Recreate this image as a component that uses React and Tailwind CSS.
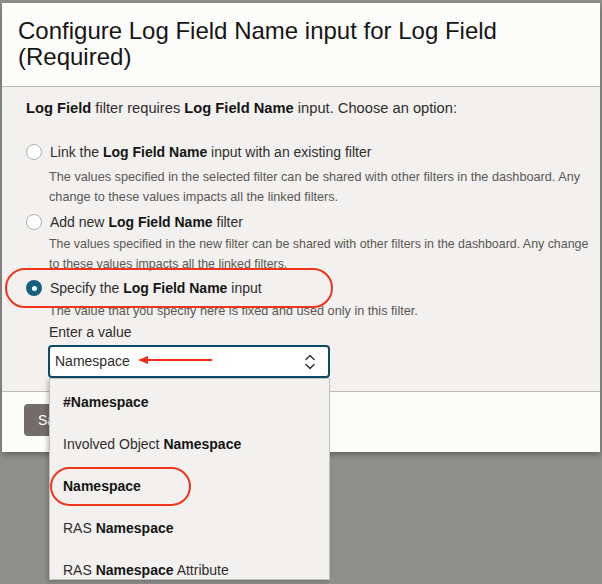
import React from 'react';

const B = ({ children }) => <span className="font-bold text-[#161513]">{children}</span>;

const OPTIONS = [
  {
    label: <>Link the <B>Log Field Name</B> input with an existing filter</>,
    desc: [
      'The values specified in the selected filter can be shared with other filters in the dashboard. Any',
      'change to these values impacts all the linked filters.',
    ],
    rowMt: 'mt-[22px]',
    descMt: 'mt-[3px]',
    descSize: 'text-[12.7px]',
  },
  {
    label: <>Add new <B>Log Field Name</B> filter</>,
    desc: [
      'The values specified in the new filter can be shared with other filters in the dashboard. Any change',
      'to these values impacts all the linked filters.',
    ],
    rowMt: 'mt-[3px]',
    descMt: 'mt-0',
    descSize: 'text-[12.4px]',
  },
  {
    label: <>Specify the <B>Log Field Name</B> input</>,
    desc: ['The value that you specify here is fixed and used only in this filter.'],
    rowMt: 'mt-[2px]',
    descMt: 'mt-[1px]',
    descSize: 'text-[12.7px]',
    checked: true,
  },
];

const ITEMS = [
  <B>#Namespace</B>,
  <>Involved Object <B>Namespace</B></>,
  <B>Namespace</B>,
  <>RAS <B>Namespace</B></>,
  <>RAS <B>Namespace</B> Attribute</>,
];

export default function App() {
  return (
    <div className="relative w-[602px] h-[584px] overflow-hidden bg-[#8f8f8d] pt-[3px] pl-[2px] font-['Liberation_Sans',Arial,sans-serif] text-[#161513]">
      {/* dialog */}
      <div className="w-[598px] shadow-[0_3px_6px_rgba(0,0,0,0.3)]">
        <div className="bg-[#fcfcfb] px-[16px] pt-[15px] pb-[16px] border-b border-[#bcb8b3] text-[24px] leading-[26px]">
          Configure Log Field Name input for Log Field
          <br />
          (Required)
        </div>

        <div className="bg-[#f2f1ef] pl-[24px] pt-[11px] pb-[13px] border-b border-[#bcb8b3]">
          <p className="text-[14.7px] leading-[20px] text-[#312d2a] whitespace-nowrap">
            <B>Log Field</B> filter requires <B>Log Field Name</B> input. Choose an option:
          </p>

          {OPTIONS.map((o, i) => (
            <div key={i}>
              <div className={`flex items-center h-[24px] ${o.rowMt}`}>
                {o.checked ? (
                  <span className="w-4 h-4 rounded-full bg-[#14607e] flex items-center justify-center">
                    <span className="w-[5px] h-[5px] rounded-full bg-white" />
                  </span>
                ) : (
                  <span className="w-4 h-4 rounded-full bg-white border border-[#b4afa9]" />
                )}
                <span className="ml-[8px] text-[14px] text-[#312d2a]">{o.label}</span>
              </div>
              <div className={`ml-[23px] leading-[20px] text-[#5b5752] ${o.descSize} ${o.descMt}`}>
                {o.desc.map((d, j) => (
                  <div key={j} className="whitespace-nowrap">{d}</div>
                ))}
              </div>
            </div>
          ))}

          <div className="ml-[23px] mt-[1px] text-[14px] leading-[20px] text-[#312d2a]">Enter a value</div>
          <div className="ml-[22px] mt-[3px] w-[282px] h-[33px] rounded-[4px] border-2 border-[#0f4a64] bg-white flex items-center justify-between pl-[5px] pr-[12px] text-[14px] text-[#312d2a]">
            <span>Namespace</span>
            <svg width="12" height="18" viewBox="0 0 12 18" fill="none" stroke="#312d2a" strokeWidth="1.4" strokeLinecap="round" strokeLinejoin="round">
              <path d="M2 6.5 L6 2.5 L10 6.5" />
              <path d="M2 11.5 L6 15.5 L10 11.5" />
            </svg>
          </div>
        </div>

        <div className="bg-[#fcfcfb] h-[60px] pl-[22px] pt-[12px]">
          <button className="h-[32px] px-[14px] rounded-[4px] bg-[#736c68] text-white text-[14px]">Save</button>
        </div>
      </div>

      {/* dropdown list */}
      <div className="absolute left-[49px] top-[378px] w-[281px] h-[202px] bg-[#f2f1ef] border border-[#c3bfba] shadow-[-2px_2px_4px_rgba(0,0,0,0.2)] pt-[2px] overflow-hidden">
        {ITEMS.map((it, i) => (
          <div key={i} className="h-[42px] flex items-center pl-[13px] text-[14px] text-[#312d2a]">
            <span>{it}</span>
          </div>
        ))}
      </div>

      {/* annotations */}
      <svg className="absolute left-[136px] top-[354px]" width="78" height="12" viewBox="0 0 78 12">
        <line x1="9" y1="6" x2="76" y2="6" stroke="#f0301a" strokeWidth="2" />
        <polygon points="2,6 12,2 12,10" fill="#f0301a" />
      </svg>
      <div className="absolute left-[5px] top-[268px] w-[328px] h-[40px] rounded-full border-2 border-[#f0361a]" />
      <div className="absolute left-[50px] top-[467px] w-[141px] h-[39px] rounded-full border-2 border-[#f0361a]" />
    </div>
  );
}
